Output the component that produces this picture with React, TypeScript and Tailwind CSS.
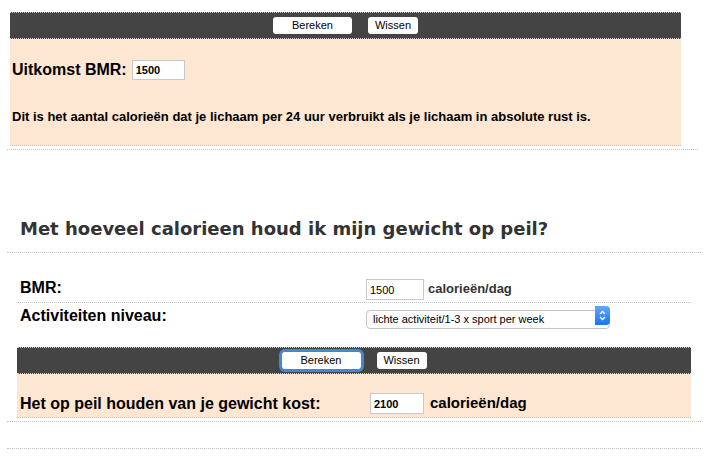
import React from 'react';

const sans = { fontFamily: '"Liberation Sans", Arial, sans-serif' };

function ButtonBar({ focused }: { focused?: boolean }) {
  return (
    <div className="h-[27px] bg-[#444444] border-y border-dotted border-[#c9c9c9] flex items-center justify-center gap-[16px]">
      <button
        className={`h-[17px] w-[79px] rounded-[3px] bg-white text-[11px] leading-none text-black ${
          focused ? 'ring-[3px] ring-[#4a86d0]' : ''
        }`}
      >
        Bereken
      </button>
      <button className="h-[17px] w-[50px] rounded-[3px] bg-white text-[11px] leading-none text-black">
        Wissen
      </button>
    </div>
  );
}

export default function App() {
  return (
    <div className="w-[721px] h-[458px] bg-white overflow-hidden text-black" style={sans}>
      {/* BMR result block */}
      <div className="pt-[12px] pl-[7px]">
        <div className="w-[691px] pb-[3px] border-b border-dotted border-[#c4c4c4]">
          <div className="ml-[3px] w-[671px]">
            <ButtonBar />
            <div className="h-[107px] bg-[#fde6d2] border-b border-dotted border-[#c9c1b8] pl-[2px]">
              <div className="pt-[19px] flex items-center gap-[5px]">
                <span className="text-[16px] font-bold">Uitkomst BMR:</span>
                <input
                  readOnly
                  value="1500"
                  className="w-[53px] h-[20px] bg-white border border-[#c8c8c8] px-[3px] text-[11px] font-bold outline-none"
                />
              </div>
              <p className="mt-[25px] text-[13px] font-bold">
                Dit is het aantal calorieën dat je lichaam per 24 uur verbruikt als je lichaam in absolute rust is.
              </p>
            </div>
          </div>
        </div>
      </div>

      {/* Maintenance calculator */}
      <div className="ml-[7px] w-[694px] mt-[67px]">
        <h2
          className="pl-[13px] pb-[11px] h-[36px] text-[18px] leading-[24px] font-bold text-[#333333] border-b border-dotted border-[#c4c4c4]"
          style={{ fontFamily: '"DejaVu Sans", Verdana, sans-serif' }}
        >
          Met hoeveel calorieen houd ik mijn gewicht op peil?
        </h2>

        <div className="ml-[10px] w-[674px] pb-[3px]">
          <div className="h-[50px] border-b border-dotted border-[#c4c4c4] flex items-end pb-[2px]">
            <span className="w-[349px] pl-[3px] text-[16px] font-bold">BMR:</span>
            <input
              readOnly
              value="1500"
              className="w-[58px] h-[21px] bg-white border border-[#c8c8c8] px-[3px] text-[11px] outline-none"
            />
            <span className="ml-[4px] self-center mt-[24px] text-[13px] font-bold text-[#333333]">calorieën/dag</span>
          </div>

          <div className="h-[44px] flex items-start pt-[3px]">
            <span className="w-[349px] pl-[3px] text-[16px] font-bold leading-[20px]">Activiteiten niveau:</span>
            <div className="relative w-[244px] h-[19px]">
              <select className="appearance-none w-full h-full rounded-[4px] border border-[#c2c2c2] bg-white pl-[6px] text-[11px] outline-none">
                <option>lichte activiteit/1-3 x sport per week</option>
              </select>
              <span className="absolute right-0 top-0 w-[15px] h-[19px] rounded-r-[4px] bg-gradient-to-b from-[#5aa9ff] to-[#1a73f0] flex items-center justify-center pointer-events-none">
                <svg width="7" height="11" viewBox="0 0 7 11" fill="none" stroke="white" strokeWidth="1.3">
                  <path d="M1 4 L3.5 1.5 L6 4" />
                  <path d="M1 7 L3.5 9.5 L6 7" />
                </svg>
              </span>
            </div>
          </div>

          <ButtonBar focused />
          <div className="h-[44px] bg-[#fde6d2] border-b border-dotted border-[#c9c1b8] flex items-center pt-[16px]">
            <span className="w-[353px] pl-[3px] text-[16px] font-bold">Het op peil houden van je gewicht kost:</span>
            <input
              readOnly
              value="2100"
              className="w-[54px] h-[21px] bg-white border border-[#c8c8c8] px-[3px] text-[11px] font-bold outline-none"
            />
            <span className="ml-[6px] text-[15px] font-bold">calorieën/dag</span>
          </div>
        </div>
        <div className="border-t border-dotted border-[#c4c4c4] h-[28px] border-b" />
      </div>
    </div>
  );
}
